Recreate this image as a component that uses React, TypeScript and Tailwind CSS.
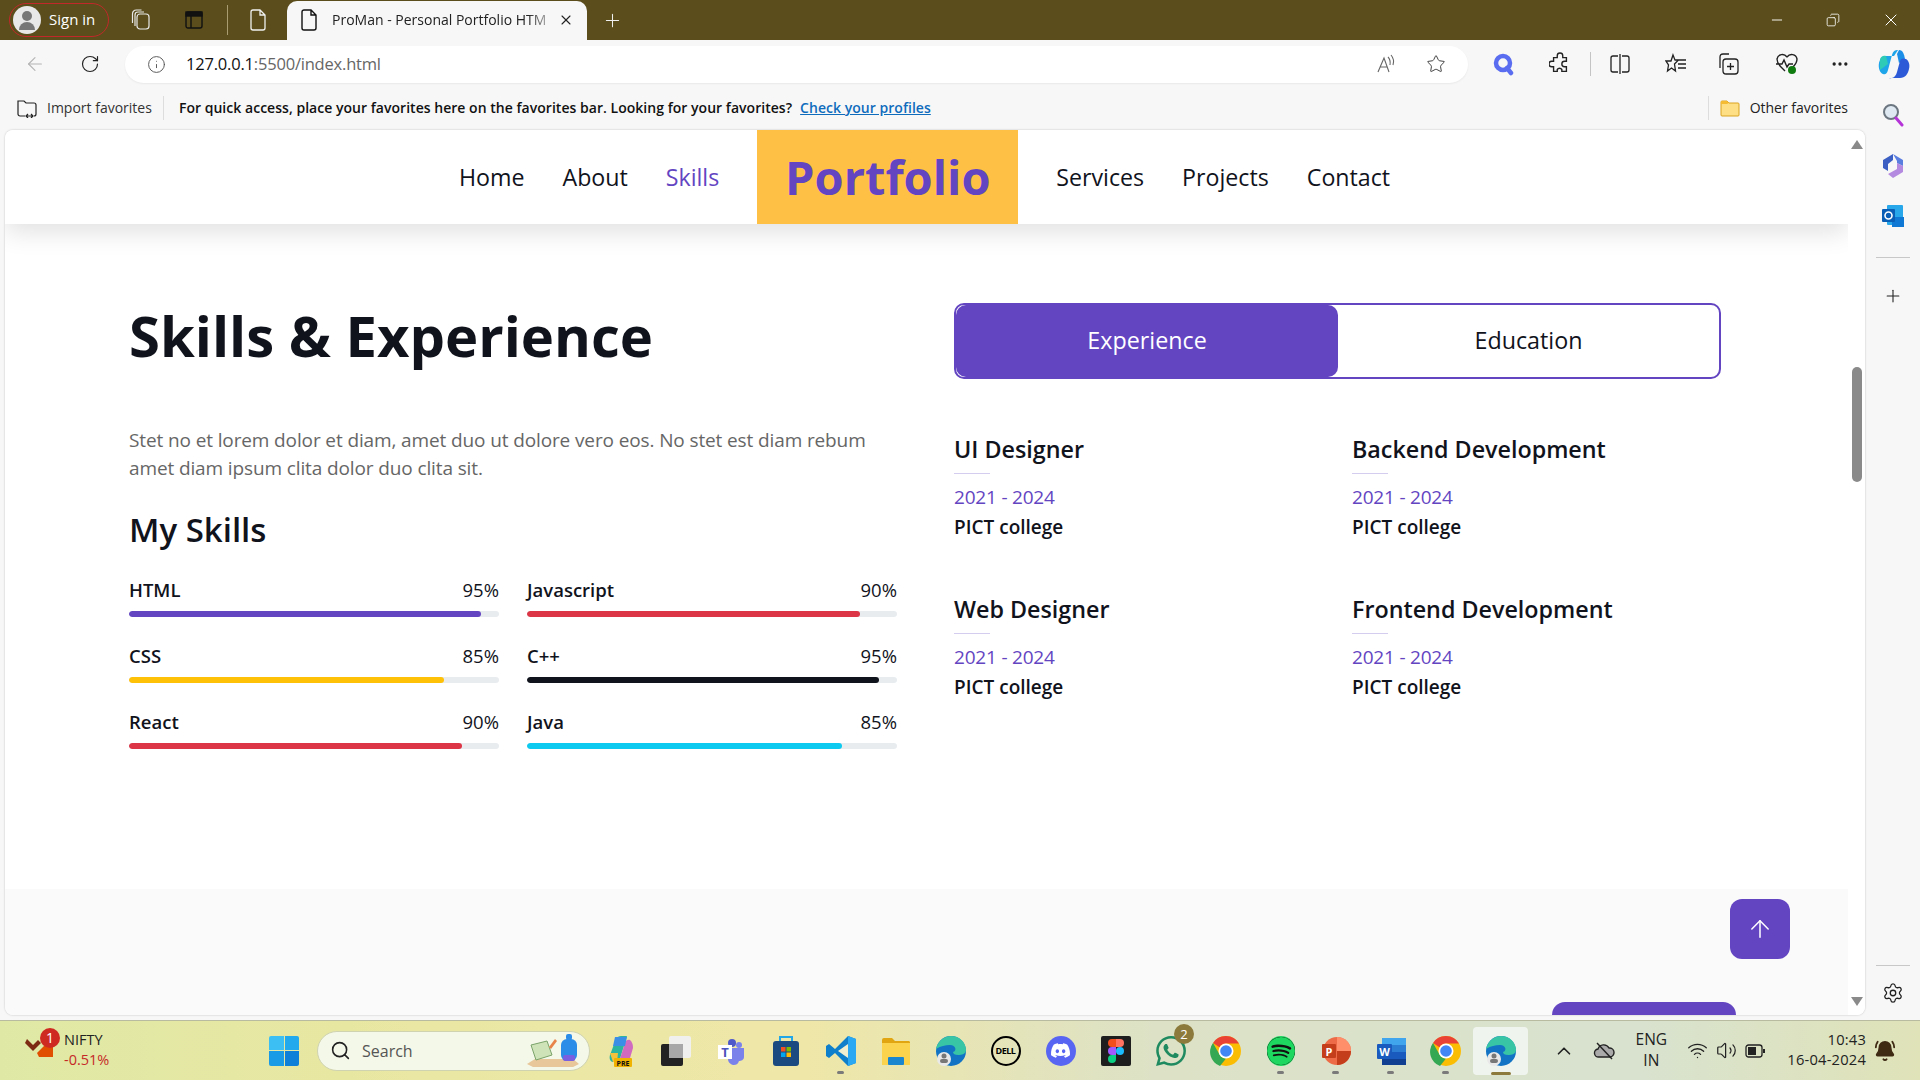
import {
  ArrowLeft,
  ArrowUp,
  BellRing,
  ChevronUp,
  Copy,
  Info,
  Minus,
  MoreHorizontal,
  Plus,
  RotateCw,
  Search,
  Settings,
  Star,
  Volume2,
  Wifi,
  X,
} from "lucide-react";
import { SiDiscord, SiSpotify, SiWhatsapp } from "react-icons/si";

const skillsLeft = [
  { name: "HTML", value: 95, bar: "bg-[#6345c2]" },
  { name: "CSS", value: 85, bar: "bg-[#ffc107]" },
  { name: "React", value: 90, bar: "bg-[#dc3545]" },
];

const skillsRight = [
  { name: "Javascript", value: 90, bar: "bg-[#dc3545]" },
  { name: "C++", value: 95, bar: "bg-[#11131c]" },
  { name: "Java", value: 85, bar: "bg-[#0dcaf0]" },
];

const jobs = ["UI Designer", "Backend Development", "Web Designer", "Frontend Development"];

function Skill({ name, value, bar }: { name: string; value: number; bar: string }) {
  return (
    <div className="h-[66px]">
      <div className="flex justify-between text-[18.5px] leading-[27px] font-semibold text-[#11131c] pt-[1px]">
        <span>{name}</span>
        <span className="font-medium">{value}%</span>
      </div>
      <div className="mt-[8px] h-[6px] rounded-full bg-[#e9ecef] overflow-hidden">
        <div className={`h-full rounded-full ${bar}`} style={{ width: `${value}%` }} />
      </div>
    </div>
  );
}

function Job({ title }: { title: string }) {
  return (
    <div className="h-[160px]">
      <h5 className="text-[23.3px] leading-[29px] font-semibold text-[#11131c]">{title}</h5>
      <div className="mt-[9px] h-[1px] w-[36px] bg-[#d5cdef]" />
      <div className="mt-[9px] text-[19px] tracking-[-0.2px] leading-[28px] text-[#6345c2]">2021 - 2024</div>
      <div className="mt-[2px] text-[19px] leading-[28px] font-semibold text-[#11131c]">PICT college</div>
    </div>
  );
}

function NavLink({ label, active }: { label: string; active?: boolean }) {
  return (
    <a className={`text-[23.2px] font-medium ${active ? "text-[#6345c2]" : "text-[#11131c]"}`}>{label}</a>
  );
}

function TitleBar() {
  return (
    <div className="h-[40px] bg-[#5b4e1c] flex items-center text-white shrink-0">
      <div className="ml-[9px] h-[34px] w-[100px] rounded-full border border-[#c0282a] flex items-center pl-[3px]">
        <div className="w-[28px] h-[28px] rounded-full bg-[#e8e8e8] flex flex-col items-center justify-center gap-[1px]">
          <div className="w-[10px] h-[10px] rounded-full bg-[#777]" />
          <div className="w-[16px] h-[8px] rounded-t-full rounded-b-[4px] bg-[#777]" />
        </div>
        <span className="ml-[8px] pb-[2px] text-[15px] font-normal">Sign in</span>
      </div>
      <svg className="ml-[22px]" width="20" height="22" viewBox="0 0 20 22" fill="none" stroke="#e8e8e8" strokeWidth="1.2">
        <rect x="6" y="5" width="12" height="15" rx="3" />
        <path d="M4 17V6c0-2 1-3 3-3h6M1.500 14V5c0-2 1-4 4-4h5" />
      </svg>
      <svg className="ml-[34px]" width="18" height="18" viewBox="0 0 18 18" fill="none" stroke="#111" strokeWidth="1.4">
        <rect x="1" y="1" width="16" height="16" rx="2" />
        <rect x="1" y="1" width="16" height="4" fill="#111" />
        <path d="M6 5v12" />
      </svg>
      <div className="ml-[24px] h-[30px] w-[1px] bg-[#a89c70]" />
      <svg className="ml-[20px]" width="20" height="22" viewBox="0 0 20 22" fill="none" stroke="#f0f0f0" strokeWidth="1.3">
        <path d="M3 3a2 2 0 0 1 2-2h7l5 5v13a2 2 0 0 1-2 2H5a2 2 0 0 1-2-2zM12 1v5h5" />
      </svg>
      <div className="ml-[19px] w-[300px] h-[39px] self-end bg-[#f7f7f7] rounded-t-[10px] flex items-center text-[#222] pl-[12px] pb-[2px]">
        <svg width="20" height="22" viewBox="0 0 20 22" fill="none" stroke="#111" strokeWidth="1.4">
          <path d="M3 3a2 2 0 0 1 2-2h7l5 5v13a2 2 0 0 1-2 2H5a2 2 0 0 1-2-2zM12 1v5h5" />
        </svg>
        <span className="ml-[13px] w-[218px] whitespace-nowrap text-[14px] [mask-image:linear-gradient(90deg,#000_90%,rgba(0,0,0,0.25))]">ProMan - Personal Portfolio HTM</span>
        <X className="ml-[8px]" size={16} strokeWidth={1.6} />
      </div>
      <Plus className="ml-[15px]" size={21} strokeWidth={1.2} color="#f0f0f0" />
      <div className="ml-auto flex items-center">
        <Minus size={16} strokeWidth={1.4} />
        <Copy className="ml-[41px] -scale-x-100" size={14} strokeWidth={1.4} />
        <X className="ml-[41px]" size={20} strokeWidth={1.2} />
        <div className="w-[19px]" />
      </div>
    </div>
  );
}

function ToolBar() {
  return (
    <div className="h-[48px] bg-[#f7f7f7] flex items-center shrink-0">
      <ArrowLeft className="ml-[24px]" size={22} strokeWidth={1.2} color="#b4b4b4" />
      <RotateCw className="ml-[34px]" size={20} strokeWidth={1.4} color="#222" />
      <div className="ml-[25px] w-[1343px] h-[37px] bg-white rounded-full flex items-center shadow-[0_1px_2px_rgba(0,0,0,0.06)]">
        <Info className="ml-[22px]" size={19} strokeWidth={1.2} color="#555" />
        <span className="ml-[20px] text-[16.5px] tracking-[-0.2px] text-[#111]">
          127.0.0.1<span className="text-[#666]">:5500/index.html</span>
        </span>
        <div className="ml-auto flex items-center">
          <svg width="20" height="20" viewBox="0 0 20 20" fill="none" stroke="#666" strokeWidth="1.1">
            <path d="M2 18 8 4l5 14M4 13h7M12 3c2 2 2.500 5 2 8M15 1c2.500 3 3 7 2 10" />
          </svg>
          <Star className="ml-[30px]" size={20} strokeWidth={1.2} color="#444" />
          <div className="w-[22px]" />
        </div>
      </div>
      <div className="ml-[24px] flex items-center">
        <svg width="22" height="24" viewBox="0 0 22 24" fill="none" stroke="#5a6cf0" strokeWidth="4.500">
          <circle cx="11" cy="11" r="7" />
          <path d="m15 16 4 5" strokeLinecap="round" />
        </svg>
        <svg className="ml-[35px]" width="22" height="24" viewBox="0 0 24 24" fill="none" stroke="#222" strokeWidth="1.500">
          <path d="M9 3a3 3 0 0 1 6 0v2h4v4h-2a3 3 0 0 0 0 6h2v5h-5v-2a3 3 0 0 0-5 0v2H5v-5H3a3 3 0 0 1 0-6h2V5h4z" />
        </svg>
        <div className="ml-[19px] h-[24px] w-[1px] bg-[#c4c4c4]" />
        <svg className="ml-[19px]" width="20" height="20" viewBox="0 0 20 20" fill="none" stroke="#222" strokeWidth="1.300">
          <path d="M8 2H3a2 2 0 0 0-2 2v12a2 2 0 0 0 2 2h5M12 2h5a2 2 0 0 1 2 2v12a2 2 0 0 1-2 2h-5M10 0v20" />
        </svg>
        <svg className="ml-[35px]" width="22" height="22" viewBox="0 0 22 22" fill="none" stroke="#222" strokeWidth="1.300">
          <path d="m8 2 2 5h-.5 4l-4 4 1 7-4-3-4 3 1-6L1 8h5zM14 7h7M13 11h8M13 15h8" />
        </svg>
        <svg className="ml-[30px]" width="22" height="24" viewBox="0 0 22 24" fill="none" stroke="#222" strokeWidth="1.300">
          <rect x="6" y="7" width="15" height="15" rx="3" />
          <path d="M13.500 11v7M10 14.500h7M3 16V5c0-2 1-3 3-3h6" />
        </svg>
        <svg className="ml-[36px]" width="24" height="24" viewBox="0 0 24 24" fill="none" stroke="#222" strokeWidth="1.400">
          <path d="M12 5c3-4 9-3 10 2 0 3-2 6-4 8M12 5C9 1 3 2 2 7c0 3 2 6 4 8l4 4M1 12h6l2-4 3 7 2-3h4" />
          <circle cx="17" cy="18" r="4" fill="#107c10" stroke="none" />
        </svg>
        <MoreHorizontal className="ml-[31px]" size={20} strokeWidth={2} color="#222" />
        <svg className="ml-[28px]" width="32" height="32" viewBox="0 0 32 32">
          <path d="M20 2c-3 0-5 1-6 5L10 22c-1 4-3 5-5 4-3-1-5-6-4-11 1-4 3-7 7-7h8z" fill="#1ea5e9" />
          <path d="M21 2c4 0 5 4 6 9l-6 4-2-9z" fill="#1b8fe8" />
          <path d="M11 30c4 1 7-2 8-6l3-11c1-3 3-3 6-2 3 2 4 6 3 10-1 5-4 9-9 9z" fill="#2d5bd8" />
          <path d="M2 12c0-3 3-5 6-4l2 8-8 6z" fill="#2ecbb6" />
        </svg>
      </div>
    </div>
  );
}

function FavBar() {
  return (
    <div className="h-[42px] bg-[#f7f7f7] flex items-center text-[14px] shrink-0 pb-[3px]">
      <svg className="ml-[17px]" width="20" height="20" viewBox="0 0 20 20" fill="none" stroke="#222" strokeWidth="1.200">
        <path d="M8 18H3a2 2 0 0 1-2-2V3h6l2 2h8a2 2 0 0 1 2 2v9a2 2 0 0 1-2 2M9 18h7M11 16l-2 2 2 2M14 16l2 2-2 2" />
      </svg>
      <span className="ml-[10px] text-[#333]">Import favorites</span>
      <div className="ml-[11px] h-[24px] w-[1px] bg-[#ddd]" />
      <span className="ml-[15px] font-semibold tracking-[0.03px] text-[#111]">For quick access, place your favorites here on the favorites bar. Looking for your favorites?</span>
      <a className="ml-[8px] underline font-semibold tracking-[0.03px] text-[#0f6cbd]">Check your profiles</a>
      <div className="ml-auto flex items-center pr-[72px]">
        <div className="h-[24px] w-[1px] bg-[#ddd]" />
        <svg className="ml-[11px]" width="20" height="20" viewBox="0 0 20 20">
          <path d="M1 4a1 1 0 0 1 1-1h5l2 2h9a1 1 0 0 1 1 1v11a1 1 0 0 1-1 1H2a1 1 0 0 1-1-1z" fill="#ffdf85" stroke="#d9a320" />
          <path d="M1 6V4a1 1 0 0 1 1-1h5l2 2-2 1z" fill="#f5bb33" />
        </svg>
        <span className="ml-[10px] text-[#222]">Other favorites</span>
      </div>
    </div>
  );
}

function SideBar() {
  return (
    <div className="w-[55px] bg-[#f7f7f7] flex flex-col items-center shrink-0">
      <svg className="mt-[-27px]" width="22" height="24" viewBox="0 0 22 24" fill="none">
        <circle cx="9" cy="9" r="7" fill="#dfe9f2" stroke="#6b7680" strokeWidth="2" />
        <path d="m14 15 6 7" stroke="#b534d8" strokeWidth="3" strokeLinecap="round" />
      </svg>
      <svg className="mt-[26px]" width="22" height="26" viewBox="0 0 22 26">
        <path d="M11 1 21 7v6l-6-3V8z" fill="#5a7de0" />
        <path d="M1 7 11 1v6L6 11v7l-5-3z" fill="#3c5fc4" />
        <path d="M21 19 11 25l-5-4 9-5v-6l6 3z" fill="#b48ae0" />
      </svg>
      <svg className="mt-[25px]" width="22" height="24" viewBox="0 0 22 24">
        <rect x="5" y="1" width="16" height="20" rx="1" fill="#28a8ea" />
        <path d="M10 13h12v10H10z" fill="#0f78d4" />
        <rect x="0" y="5" width="13" height="13" rx="1" fill="#0a5eb5" />
        <circle cx="6.500" cy="11.500" r="3.500" fill="none" stroke="#fff" strokeWidth="1.600" />
      </svg>
      <div className="mt-[29px] w-[34px] h-[1px] bg-[#c8c8c8]" />
      <Plus className="mt-[28px]" size={20} strokeWidth={1.3} color="#222" />
      <div className="mt-auto w-[34px] h-[1px] bg-[#c8c8c8]" />
      <Settings className="mt-[16px] mb-[16px]" size={22} strokeWidth={1.4} color="#222" />
    </div>
  );
}

function Page() {
  return (
    <div className="flex-1 ml-[5px] mb-[5px] rounded-[8px] bg-white overflow-hidden flex shadow-[0_0_2px_rgba(0,0,0,0.25)] relative">
      <div className="flex-1 flex flex-col relative min-w-0" style={{ fontFamily: '"Open Sans", sans-serif' }}>
        <nav className="h-[94px] bg-white flex items-center justify-center gap-[38px] pr-[4px] shadow-[0_8px_24px_rgba(0,0,0,0.12)] relative shrink-0">
          <NavLink label="Home" />
          <NavLink label="About" />
          <NavLink label="Skills" active />
          <div className="h-[94px] w-[261px] bg-[#ffc145] flex items-center justify-center pt-[1px] text-[47px] font-bold text-[#6345c2]">Portfolio</div>
          <NavLink label="Services" />
          <NavLink label="Projects" />
          <NavLink label="Contact" />
        </nav>

        <section className="flex-1 pl-[124px] flex gap-[57px] pt-[78px] min-h-0">
          <div className="w-[768px]">
            <h1 className="text-[56.2px] leading-[67px] font-bold text-[#11131c]">Skills &amp; Experience</h1>
            <p className="mt-[57px] text-[19px] tracking-[-0.12px] leading-[28px] text-[#666666]">
              Stet no et lorem dolor et diam, amet duo ut dolore vero eos. No stet est diam rebum amet diam ipsum clita dolor duo clita sit.
            </p>
            <h3 className="mt-[26px] text-[33px] leading-[43px] font-semibold text-[#11131c]">My Skills</h3>
            <div className="mt-[24px] flex gap-[28px]">
              <div className="w-[370px]">
                {skillsLeft.map((s) => (
                  <Skill key={s.name} {...s} />
                ))}
              </div>
              <div className="w-[370px]">
                {skillsRight.map((s) => (
                  <Skill key={s.name} {...s} />
                ))}
              </div>
            </div>
          </div>
          <div className="w-[767px] mt-[1px]">
            <div className="h-[76px] border-2 border-[#6345c2] rounded-[10px] flex text-[23.3px]">
              <div className="w-[382px] pb-[2px] bg-[#6345c2] rounded-[10px] flex items-center justify-center text-white">Experience</div>
              <div className="flex-1 pb-[2px] flex items-center justify-center text-[#11131c]">Education</div>
            </div>
            <div className="mt-[56px] grid grid-cols-2 w-[796px]">
              {jobs.map((j) => (
                <Job key={j} title={j} />
              ))}
            </div>
          </div>
        </section>

        <div className="h-[126px] bg-[#fafafa] shrink-0 flex items-end justify-end pr-[112px]">
          <div className="w-[184px] h-[13px] bg-[#6345c2] rounded-t-[14px]" />
        </div>
        <a className="absolute right-[58px] bottom-[56px] w-[60px] h-[60px] rounded-[12px] bg-[#6345c2] flex items-center justify-center">
          <ArrowUp size={28} strokeWidth={1.3} color="#fff" />
        </a>
      </div>

      <div className="w-[17px] bg-white flex flex-col items-center shrink-0 relative">
        <div className="mt-[10px] w-0 h-0 border-x-[6px] border-x-transparent border-b-[9px] border-b-[#8a8a8a]" />
        <div className="mt-[218px] w-[10px] h-[115px] rounded-full bg-[#8a8a8a]" />
        <div className="mt-auto mb-[9px] w-0 h-0 border-x-[6px] border-x-transparent border-t-[9px] border-t-[#8a8a8a]" />
      </div>
    </div>
  );
}

function TaskSlot({ children, dot, active }: { children: React.ReactNode; dot?: boolean; active?: boolean }) {
  return (
    <div className={`relative w-[55px] h-[48px] rounded-[4px] flex items-center justify-center ${active ? "bg-[#f0f4ee]" : ""}`}>
      {children}
      {dot && <div className="absolute bottom-[1px] w-[7px] h-[3px] rounded-full bg-[#7a7a7a]" />}
      {active && <div className="absolute bottom-0 w-[20px] h-[3px] rounded-full bg-[#8c7a3c]" />}
    </div>
  );
}

function EdgeIcon() {
  return (
    <svg width="32" height="32" viewBox="0 0 32 32">
      <circle cx="16" cy="16" r="15" fill="#1273c4" />
      <path d="M1 14C3 5 10 1 16 1c8 0 15 6 15 14 0 4-4 5-8 5-3 0-5-1-5-3 4-1 3-7-3-7-5 0-9 1-14 4z" fill="#37c5a6" />
      <circle cx="9" cy="24" r="7" fill="#e8e8e8" />
      <circle cx="9" cy="21" r="2.500" fill="#777" />
      <rect x="5" y="24" width="8" height="4" rx="2" fill="#777" />
    </svg>
  );
}

function ChromeIcon() {
  return (
    <svg width="32" height="32" viewBox="0 0 32 32">
      <circle cx="16" cy="16" r="15" fill="#fbbc04" />
      <path d="M16 1a15 15 0 0 1 13 7.500H16a7.500 7.500 0 0 0-6.500 3.750L3 8A15 15 0 0 1 16 1z" fill="#ea4335" />
      <path d="M3 8l6.500 11.500A7.500 7.500 0 0 0 16 23.500L10 31A15 15 0 0 1 3 8z" fill="#34a853" />
      <circle cx="16" cy="16" r="7.500" fill="#fff" />
      <circle cx="16" cy="16" r="5.800" fill="#4285f4" />
    </svg>
  );
}

function TaskBar() {
  return (
    <div className="h-[60px] shrink-0 border-t border-[#b8bba0] bg-[linear-gradient(90deg,#dfe9a5_0%,#e8e7a2_18%,#efe7a8_42%,#dde2c6_60%,#d8e2cf_85%,#e0e3b8_100%)] flex items-center relative">
      <div className="absolute left-[25px] top-[7px] w-[56px] h-[48px]">
        <svg className="absolute left-0 top-[3px]" width="30" height="28" viewBox="0 0 30 28">
          <path d="M2 8 8 14 13 9l3 3-8 8-8-8z" fill="#7d2b12" />
          <path d="M12 22l9-9h7v13H14z" fill="#e04e00" />
        </svg>
        <div className="absolute left-[15px] top-0 w-[20px] h-[20px] rounded-full bg-[#cf2a22] text-white text-[14px] leading-[20px] text-center">1</div>
      </div>
      <div className="ml-[64px] w-[50px] text-[14.5px] leading-[20px] pb-[2px]">
        <div className="text-[#222]">NIFTY</div>
        <div className="text-[#c62828]">-0.51%</div>
      </div>
      <div className="ml-[155px] w-[30px] h-[30px] grid grid-cols-2 gap-[1px] overflow-hidden rounded-[2px]">
        <div className="bg-[#3cc0f4]" />
        <div className="bg-[#22a8ec]" />
        <div className="bg-[#1a9be6]" />
        <div className="bg-[#0f80d8]" />
      </div>
      <div className="ml-[18px] w-[273px] h-[40px] rounded-full bg-[#f4f8e8] border border-[#cfd3b0] flex items-center">
        <Search className="ml-[12px]" size={21} strokeWidth={1.8} color="#222" />
        <span className="ml-[11px] text-[16px] text-[#555]">Search</span>
        <svg className="ml-auto mr-[6px]" width="58" height="36" viewBox="0 0 58 36">
          <path d="M2 31 10 26h38l6 5-6 3H8z" fill="#e8c79a" />
          <path d="M6 12 22 8l5 14-16 5z" fill="#cfe3b8" stroke="#7aa36a" />
          <path d="m24 14 6-8 2 2-6 8z" fill="#e8834a" />
          <rect x="36" y="6" width="16" height="22" rx="6" fill="#2b8de8" />
          <rect x="41" y="1" width="6" height="6" rx="2" fill="#2b8de8" />
          <rect x="38" y="22" width="12" height="6" rx="2" fill="#7a5fe0" />
        </svg>
      </div>
      <div className="ml-[3px] flex items-center">
        <TaskSlot>
          <svg width="30" height="32" viewBox="0 0 30 32">
            <path d="M4 20 10 4c1-2 3-3 5-3h6l-8 26H7c-3 0-4-4-3-7z" fill="#2bb5a0" />
            <path d="M13 27 19 8c1-3 3-4 5-3 2 2 3 4 3 8l-3 10c-1 3-3 4-5 4z" fill="#d06ac0" />
            <path d="M9 2h12l-2 9H7z" fill="#3a8ee6" />
            <path d="M4 18h8l-1 9H7z" fill="#f5c23d" />
            <rect x="8" y="23" width="18" height="9" rx="1" fill="#f0b400" />
            <text x="17" y="30.500" fontSize="7" fontWeight="700" textAnchor="middle" fill="#111">PRE</text>
          </svg>
        </TaskSlot>
        <TaskSlot>
          <div className="relative w-[30px] h-[30px]">
            <div className="absolute left-0 bottom-0 w-[22px] h-[22px] bg-[#222] rounded-[2px]" />
            <div className="absolute right-0 top-0 w-[22px] h-[22px] bg-[#f0f0ee] rounded-[2px]" />
            <div className="absolute left-[8px] top-[8px] w-[14px] h-[14px] bg-[#a8a8a8]" />
          </div>
        </TaskSlot>
        <TaskSlot>
          <svg width="28" height="28" viewBox="0 0 28 28">
            <circle cx="22" cy="8" r="3" fill="#7b83eb" />
            <circle cx="15" cy="6" r="4" fill="#5059c9" />
            <path d="M11 11h16v9c0 3-3 4-5 4-1 3-3 4-5 4s-6-2-6-6z" fill="#7b83eb" />
            <rect x="1" y="8" width="14" height="14" fill="#fff" />
            <text x="8" y="20" fontSize="13" fontWeight="700" textAnchor="middle" fill="#4b53bc">T</text>
          </svg>
        </TaskSlot>
        <TaskSlot>
          <svg width="28" height="32" viewBox="0 0 28 32">
            <path d="M8 6V2h12v4" fill="none" stroke="#22a7e8" strokeWidth="2" />
            <rect x="1" y="6" width="26" height="25" rx="3" fill="#1a4a80" />
            <rect x="9" y="12" width="4.500" height="4.500" fill="#f25022" />
            <rect x="14.500" y="12" width="4.500" height="4.500" fill="#7fba00" />
            <rect x="9" y="17.500" width="4.500" height="4.500" fill="#00a4ef" />
            <rect x="14.500" y="17.500" width="4.500" height="4.500" fill="#ffb900" />
          </svg>
        </TaskSlot>
        <TaskSlot dot>
          <svg width="30" height="32" viewBox="0 0 30 32">
            <path d="M22 1 9 14 3 9 0 11v10l3 2 6-5 13 13 8-3V4z" fill="#0d7fcb" />
            <path d="M22 1v30l8-3V4z" fill="#2aa9f2" />
            <path d="M22 9 12 16l10 7z" fill="#f0f0d0" />
          </svg>
        </TaskSlot>
        <TaskSlot>
          <svg width="30" height="30" viewBox="0 0 30 30">
            <path d="M1 4a2 2 0 0 1 2-2h8l3 3h14a2 2 0 0 1 1 1v3H1z" fill="#e0a510" />
            <rect x="1" y="7" width="28" height="22" fill="#fcd34d" />
            <rect x="7" y="21" width="16" height="8" rx="1" fill="#1a86d0" />
          </svg>
        </TaskSlot>
        <TaskSlot>
          <EdgeIcon />
        </TaskSlot>
        <TaskSlot>
          <div className="w-[30px] h-[30px] rounded-full border-[2px] border-black flex items-center justify-center text-[9px] font-bold tracking-[-0.5px] text-black">DELL</div>
        </TaskSlot>
        <TaskSlot>
          <div className="w-[30px] h-[30px] rounded-full bg-[#5865f2] flex items-center justify-center">
            <SiDiscord size={19} color="#fff" />
          </div>
        </TaskSlot>
        <TaskSlot>
          <div className="w-[30px] h-[30px] rounded-[2px] bg-[#1e1e1e] flex items-center justify-center">
            <svg width="16" height="24" viewBox="0 0 16 24">
              <path d="M4 0h4v8H4a4 4 0 0 1 0-8z" fill="#f24e1e" />
              <path d="M8 0h4a4 4 0 0 1 0 8H8z" fill="#ff7262" />
              <path d="M4 8h4v8H4a4 4 0 0 1 0-8z" fill="#a259ff" />
              <circle cx="12" cy="12" r="4" fill="#1abcfe" />
              <path d="M4 16h4v4a4 4 0 1 1-4-4z" fill="#0acf83" />
            </svg>
          </div>
        </TaskSlot>
        <TaskSlot>
          <SiWhatsapp size={30} color="#1f8a5f" />
          <div className="absolute right-[4px] top-[-3px] w-[20px] h-[20px] rounded-full bg-[#8c7a3c] text-white text-[13px] leading-[20px] text-center">2</div>
        </TaskSlot>
        <TaskSlot>
          <ChromeIcon />
        </TaskSlot>
        <TaskSlot dot>
          <div className="w-[28px] h-[30px] rounded-full bg-[#1ed760] flex items-center justify-center">
            <SiSpotify size={28} color="#1ed760" className="bg-[#111] rounded-full" />
          </div>
        </TaskSlot>
        <TaskSlot dot>
          <svg width="30" height="30" viewBox="0 0 30 30">
            <circle cx="16" cy="15" r="14" fill="#ed6c47" />
            <path d="M16 1a14 14 0 0 1 14 14H16z" fill="#ff8f6b" />
            <path d="M16 15h14a14 14 0 0 1-14 14z" fill="#c43e1c" />
            <rect x="1" y="8" width="14" height="14" rx="1" fill="#c43e1c" />
            <text x="8" y="20" fontSize="11" fontWeight="700" textAnchor="middle" fill="#fff">P</text>
          </svg>
        </TaskSlot>
        <TaskSlot dot>
          <svg width="30" height="30" viewBox="0 0 30 30">
            <rect x="6" y="2" width="24" height="7" fill="#41a5ee" />
            <rect x="6" y="9" width="24" height="7" fill="#2b7cd3" />
            <rect x="6" y="16" width="24" height="7" fill="#185abd" />
            <rect x="6" y="23" width="24" height="6" fill="#103f91" />
            <rect x="1" y="8" width="15" height="15" rx="1" fill="#185abd" />
            <text x="8.500" y="20" fontSize="11" fontWeight="700" textAnchor="middle" fill="#fff">W</text>
          </svg>
        </TaskSlot>
        <TaskSlot dot>
          <ChromeIcon />
        </TaskSlot>
        <TaskSlot active>
          <EdgeIcon />
        </TaskSlot>
      </div>
      <div className="ml-auto flex items-center text-[#222] pr-[24px]">
        <ChevronUp size={22} strokeWidth={1.8} />
        <svg className="ml-[18px]" width="22" height="20" viewBox="0 0 22 20" fill="none" stroke="#222" strokeWidth="1.400">
          <path d="M6 16a4 4 0 0 1-1-8 6 6 0 0 1 11-1 4.500 4.500 0 0 1 1 9z" fill="#aaa" />
          <path d="m4 2 15 16" />
        </svg>
        <div className="ml-[19px] w-[34px] text-center text-[15.5px] leading-[21px] pb-[1px]">ENG<br />IN</div>
        <Wifi className="ml-[19px]" size={21} strokeWidth={1.5} />
        <Volume2 className="ml-[8px]" size={21} strokeWidth={1.4} />
        <svg className="ml-[8px]" width="20" height="14" viewBox="0 0 20 14" fill="none" stroke="#222" strokeWidth="1.300">
          <rect x="1" y="1" width="16" height="12" rx="2.500" />
          <rect x="3" y="3" width="8" height="8" fill="#222" stroke="none" />
          <path d="M19 5v4" strokeWidth="2" />
        </svg>
        <div className="ml-[22px] pb-[3px] text-right text-[14.7px] tracking-[0.2px] leading-[20px]">
          <div>10:43</div>
          <div>16-04-2024</div>
        </div>
        <BellRing className="ml-[8px]" size={22} fill="#3f2a14" color="#3f2a14" />
      </div>
    </div>
  );
}

export default function App() {
  return (
    <div className="w-[1920px] h-[1080px] overflow-hidden flex flex-col bg-[#f7f7f7]" style={{ fontFamily: '"Open Sans", "Noto Sans", sans-serif' }}>
      <TitleBar />
      <ToolBar />
      <FavBar />
      <div className="flex-1 flex min-h-0">
        <Page />
        <SideBar />
      </div>
      <TaskBar />
    </div>
  );
}
